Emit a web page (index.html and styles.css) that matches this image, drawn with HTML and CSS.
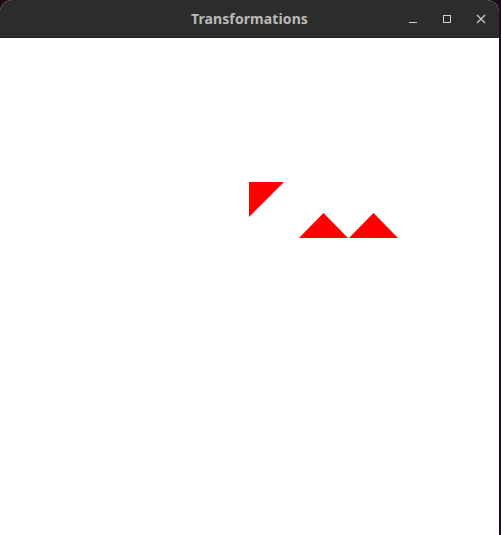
FILE: index.html
```html
<!DOCTYPE html>
<html>
<head>
<meta charset="utf-8">
<link rel="stylesheet" href="styles.css">
</head>
<body>
<div class="window">
  <div class="titlebar">
    <span class="title">Transformations</span>
    <div class="controls">
      <svg class="btn" width="10" height="10" viewBox="0 0 10 10"><line x1="1" y1="8.5" x2="9" y2="8.5" stroke="#cfcfcf" stroke-width="1"/></svg>
      <svg class="btn" width="10" height="10" viewBox="0 0 10 10"><rect x="1.5" y="1.5" width="7" height="7" fill="none" stroke="#cfcfcf" stroke-width="1"/></svg>
      <svg class="btn" width="10" height="10" viewBox="0 0 10 10"><path d="M1 1 L9 9 M9 1 L1 9" stroke="#cfcfcf" stroke-width="1.2"/></svg>
    </div>
  </div>
  <div class="canvas">
    <svg width="499" height="497" viewBox="0 38 499 497">
      <polygon points="249,182 284,182 249,217" fill="#ff0000"/>
      <polygon points="299,238 348,238 323.5,213" fill="#ff0000"/>
      <polygon points="349,238 398,238 373.5,213" fill="#ff0000"/>
    </svg>
  </div>
</div>
</body>
</html>
```
FILE: styles.css
```css
html, body {
  margin: 0;
  padding: 0;
  background: #1e0a18;
  width: 501px;
  height: 535px;
  overflow: hidden;
}
.window {
  width: 499px;
  height: 535px;
  border-radius: 12px 12px 0 0;
  overflow: hidden;
  background: #ffffff;
  display: flex;
  flex-direction: column;
}
.titlebar {
  height: 37px;
  flex: none;
  background: #2c2c2c;
  border-bottom: 1px solid #1c1c1c;
  display: flex;
  align-items: center;
  justify-content: center;
  position: relative;
}
.title {
  font-family: "Noto Sans", "DejaVu Sans", sans-serif;
  font-weight: bold;
  font-size: 14px;
  color: #b9b9b9;
  letter-spacing: 0.1px;
  margin-top: -1px;
}
.controls {
  position: absolute;
  right: 13px;
  top: 14px;
  display: flex;
  gap: 24px;
}
.btn {
  display: block;
}
.canvas {
  flex: 1;
  background: #ffffff;
}
.canvas svg {
  display: block;
}
```
